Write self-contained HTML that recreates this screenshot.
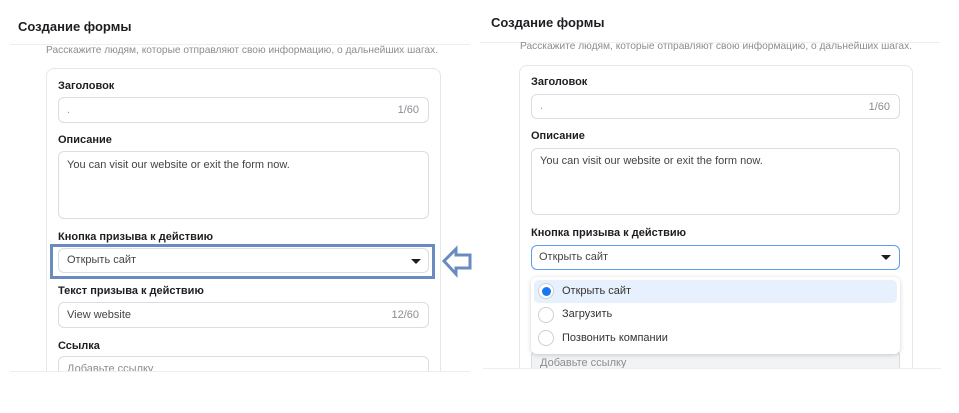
<!DOCTYPE html>
<html><head><meta charset="utf-8"><style>
*{box-sizing:border-box;margin:0;padding:0}
body{width:959px;height:413px;background:#fff;position:relative;overflow:hidden;font-family:"Liberation Sans","DejaVu Sans",sans-serif;color:#1c1e21}
.a{position:absolute}
.t{font-size:13px;font-weight:bold;color:#1c1e21}
.sub{font-size:10.2px;color:#8a8d91;white-space:nowrap}
.lbl{font-size:11px;font-weight:bold;color:#1c1e21}
.in{position:absolute;border:1px solid #dadde1;border-radius:6px;background:#fff;font-size:11px;color:#444}
.card{position:absolute;border:1px solid #e4e6eb;border-radius:8px;background:#fff}
.hl{position:absolute;height:1px;background:#eceef0}
.cnt{position:absolute;right:9px;top:6px;color:#8a8d91;font-size:11px}
.tri{position:absolute;width:0;height:0;border-left:5px solid transparent;border-right:5px solid transparent;border-top:5px solid #1c1e21}
.rad{position:absolute;width:16px;height:16px;border:1px solid #ccd0d5;border-radius:50%;background:#fff}
</style></head><body>
<!-- LEFT -->
<div class="a t" style="left:18px;top:19px">Создание формы</div>
<div class="hl" style="left:10px;top:44px;width:460px"></div>
<div class="a sub" style="left:46px;top:45px">Расскажите людям, которые отправляют свою информацию, о дальнейших шагах.</div>
<div class="card" style="left:46px;top:68px;width:395px;height:320px"></div>
<div class="a lbl" style="left:58px;top:80px">Заголовок</div>
<div class="in" style="left:58px;top:97px;width:371px;height:26px"><span class="a" style="left:8px;top:6px;color:#999">.</span><span class="cnt">1/60</span></div>
<div class="a lbl" style="left:58px;top:134px">Описание</div>
<div class="in" style="left:58px;top:151px;width:371px;height:68px"><span class="a" style="left:8px;top:7px">You can visit our website or exit the form now.</span></div>
<div class="a lbl" style="left:58px;top:231px">Кнопка призыва к действию</div>
<div class="in" style="left:58px;top:248px;width:371px;height:25px"><span class="a" style="left:8px;top:5px">Открыть сайт</span><div class="tri" style="left:352px;top:10px"></div></div>
<div class="a" style="left:50px;top:244px;width:385px;height:35px;border:3px solid #6a8bbf"></div>
<svg class="a" style="left:441px;top:245px" width="32" height="34" viewBox="0 0 32 34"><path d="M3 16 L15 4 L15 10 L29 10 L29 23 L15 23 L15 29 Z" fill="#fff" stroke="#6a8bbf" stroke-width="3" stroke-linejoin="miter"/></svg>
<div class="a lbl" style="left:58px;top:285px">Текст призыва к действию</div>
<div class="in" style="left:58px;top:302px;width:371px;height:26px"><span class="a" style="left:8px;top:6px">View website</span><span class="cnt">12/60</span></div>
<div class="a lbl" style="left:58px;top:340px">Ссылка</div>
<div class="in" style="left:58px;top:356px;width:371px;height:26px"><span class="a" style="left:8px;top:6px;color:#8a8d91">Добавьте ссылку</span></div>
<div class="a" style="left:0;top:372px;width:480px;height:41px;background:#fff"></div>
<div class="hl" style="left:10px;top:371px;width:460px"></div>

<!-- RIGHT -->
<div class="a t" style="left:491px;top:15px">Создание формы</div>
<div class="hl" style="left:480px;top:42px;width:460px"></div>
<div class="a sub" style="left:520px;top:41px">Расскажите людям, которые отправляют свою информацию, о дальнейших шагах.</div>
<div class="card" style="left:519px;top:65px;width:394px;height:320px"></div>
<div class="a lbl" style="left:531px;top:76px">Заголовок</div>
<div class="in" style="left:531px;top:94px;width:369px;height:25px"><span class="a" style="left:8px;top:5px;color:#999">.</span><span class="cnt">1/60</span></div>
<div class="a lbl" style="left:531px;top:130px">Описание</div>
<div class="in" style="left:531px;top:148px;width:369px;height:67px"><span class="a" style="left:8px;top:6px">You can visit our website or exit the form now.</span></div>
<div class="a lbl" style="left:531px;top:227px">Кнопка призыва к действию</div>
<div class="in" style="left:531px;top:245px;width:369px;height:25px;border:1.5px solid #5c9cf5"><span class="a" style="left:7px;top:5px">Открыть сайт</span><div class="tri" style="left:349px;top:9px"></div></div>
<div class="in" style="left:531px;top:350px;width:369px;height:26px;background:#f2f3f5"><span class="a" style="left:8px;top:6px;color:#8a8d91">Добавьте ссылку</span></div>
<div class="a" style="left:531px;top:277px;width:369px;height:77px;background:#fff;border-radius:6px;box-shadow:0 1px 5px rgba(0,0,0,.18)">
 <div class="a" style="left:3px;top:3px;width:363px;height:23px;background:#e7f0fd;border-radius:5px"></div>
 <div class="rad" style="left:7px;top:6px"></div><div class="a" style="left:11px;top:10px;width:9px;height:9px;border-radius:50%;background:#1877f2"></div>
 <span class="a" style="left:31px;top:8px;font-size:11px;color:#333">Открыть сайт</span>
 <div class="rad" style="left:7px;top:30px"></div>
 <span class="a" style="left:31px;top:31px;font-size:11px;color:#333">Загрузить</span>
 <div class="rad" style="left:7px;top:53px"></div>
 <span class="a" style="left:31px;top:55px;font-size:11px;color:#333">Позвонить компании</span>
</div>
<div class="a" style="left:480px;top:369px;width:479px;height:44px;background:#fff"></div>
<div class="hl" style="left:483px;top:368px;width:458px"></div>
</body></html>
